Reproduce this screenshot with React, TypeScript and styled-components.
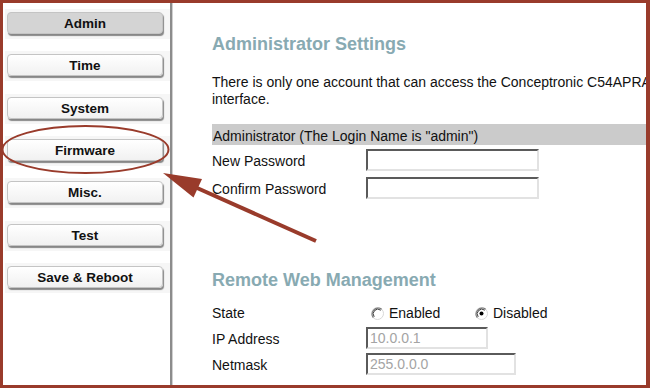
import React from 'react';
import styled, { createGlobalStyle } from 'styled-components';

const GlobalStyle = createGlobalStyle`
  html, body {
    margin: 0;
    padding: 0;
    background: #ffffff;
  }
  body {
    font-family: 'Liberation Sans', Arial, sans-serif;
    color: #111111;
  }
`;

const accent = '#993b2b';

const Frame = styled.div`
  position: relative;
  box-sizing: border-box;
  width: 650px;
  height: 388px;
  border: 3px solid ${accent};
  border-right-width: 4px;
  display: flex;
  overflow: hidden;
  background: #ffffff;
`;

const Sidebar = styled.nav`
  width: 167px;
  flex: none;
  display: flex;
  flex-direction: column;
  gap: 12.33px;
  padding: 6px 0 0 2px;
  box-sizing: border-box;
`;

const NavCell = styled.div`
  padding: 3px 4px 5px 2px;
  background: #f6f6f6;
`;

const NavButton = styled.button<{ $active?: boolean }>`
  display: block;
  box-sizing: border-box;
  width: 156px;
  height: 22px;
  padding: 1px 0 0;
  border: 1px solid #c4c4c4;
  border-radius: 4px;
  background: ${(p) => (p.$active ? '#d4d4d4' : 'linear-gradient(#ffffff, #f1f1f1)')};
  box-shadow: 1px 2px 1px rgba(0, 0, 0, 0.45);
  font-family: 'Liberation Sans', Arial, sans-serif;
  font-weight: bold;
  font-size: 13.5px;
  line-height: 20px;
  color: #111111;
  text-align: center;
`;

const Content = styled.main`
  flex: 1;
  min-width: 0;
  border-left: 2px solid #8c8c8c;
  box-shadow: inset 1px 0 0 #d0d0d0;
  padding: 30px 0 0 40px;
  overflow: hidden;
  font-size: 14px;
`;

const Heading = styled.h2<{ $gap: number }>`
  margin: ${(p) => p.$gap}px 0 0;
  font-size: 18px;
  line-height: 22px;
  font-weight: bold;
  color: #88aab2;
  white-space: nowrap;
`;

const Intro = styled.p`
  margin: 19px 0 0;
  line-height: 17px;
  white-space: nowrap;
`;

const SectionBar = styled.div`
  margin-top: 16px;
  height: 21px;
  padding: 3px 0 0 1px;
  box-sizing: border-box;
  line-height: 18px;
  background: #cbcbcb;
  white-space: nowrap;
`;

const FormGrid = styled.div<{ $row: number; $gap: number }>`
  display: grid;
  grid-template-columns: 154px 1fr;
  grid-auto-rows: ${(p) => p.$row}px;
  align-items: center;
  margin-top: ${(p) => p.$gap}px;
`;

const Label = styled.span`
  white-space: nowrap;
  line-height: 17px;
  padding-top: 2px;
`;

const Field = styled.div<{ $width: number; $muted?: boolean }>`
  box-sizing: border-box;
  width: ${(p) => p.$width}px;
  height: 22px;
  border-style: solid;
  border-width: 2px;
  border-color: #5a5a5a #e2e2e2 #e2e2e2 #5a5a5a;
  background: #ffffff;
  padding-left: 2px;
  line-height: 18px;
  color: ${(p) => (p.$muted ? '#a4a4a4' : '#111111')};
`;

const RadioGroup = styled.div`
  display: flex;
  align-items: center;
  padding-left: 5px;
`;

const RadioOption = styled.label<{ $width?: number }>`
  display: flex;
  align-items: center;
  gap: 5px;
  width: ${(p) => (p.$width ? `${p.$width}px` : 'auto')};
  line-height: 17px;
  padding-top: 2px;
`;

const Overlay = styled.svg`
  position: absolute;
  left: -3px;
  top: -3px;
  pointer-events: none;
`;

const Radio: React.FC<{ checked?: boolean }> = ({ checked }) => (
  <svg width="13" height="13" viewBox="0 0 13 13">
    <circle cx="6.5" cy="6.5" r="6" fill="#ffffff" stroke="#d8d8d8" />
    <path d="M2.3 10.7 A6 6 0 0 1 10.7 2.3" fill="none" stroke="#7a7a7a" strokeWidth="1.2" />
    <path d="M3.2 9.8 A4.7 4.7 0 0 1 9.8 3.2" fill="none" stroke="#3a3a3a" strokeWidth="1" />
    {checked && <circle cx="6.5" cy="6.5" r="2" fill="#000000" />}
  </svg>
);

const navItems = ['Admin', 'Time', 'System', 'Firmware', 'Misc.', 'Test', 'Save & Reboot'];

const App: React.FC = () => (
  <>
    <GlobalStyle />
    <Frame>
      <Sidebar>
        {navItems.map((item) => (
          <NavCell key={item}>
            <NavButton $active={item === 'Admin'}>{item}</NavButton>
          </NavCell>
        ))}
      </Sidebar>
      <Content>
        <Heading $gap={0}>Administrator Settings</Heading>
        <Intro>
          There is only one account that can access the Conceptronic C54APRA
          <br />
          interface.
        </Intro>
        <SectionBar>Administrator (The Login Name is "admin")</SectionBar>
        <FormGrid $row={28} $gap={1}>
          <Label>New Password</Label>
          <Field $width={173} />
          <Label>Confirm Password</Label>
          <Field $width={173} />
        </FormGrid>
        <Heading $gap={67}>Remote Web Management</Heading>
        <FormGrid $row={26} $gap={8}>
          <Label>State</Label>
          <RadioGroup>
            <RadioOption $width={104}>
              <Radio />
              Enabled
            </RadioOption>
            <RadioOption>
              <Radio checked />
              Disabled
            </RadioOption>
          </RadioGroup>
          <Label>IP Address</Label>
          <Field $width={122} $muted>
            10.0.0.1
          </Field>
          <Label>Netmask</Label>
          <Field $width={150} $muted>
            255.0.0.0
          </Field>
        </FormGrid>
      </Content>
      <Overlay width="650" height="388" viewBox="0 0 650 388">
        <ellipse cx="85.5" cy="149.5" rx="83" ry="23.5" fill="none" stroke={accent} strokeWidth="2" />
        <line x1="196" y1="187.5" x2="316" y2="241" stroke={accent} strokeWidth="4" />
        <polygon points="163,173 202,179 193.5,197.5" fill={accent} />
      </Overlay>
    </Frame>
  </>
);

export default App;
